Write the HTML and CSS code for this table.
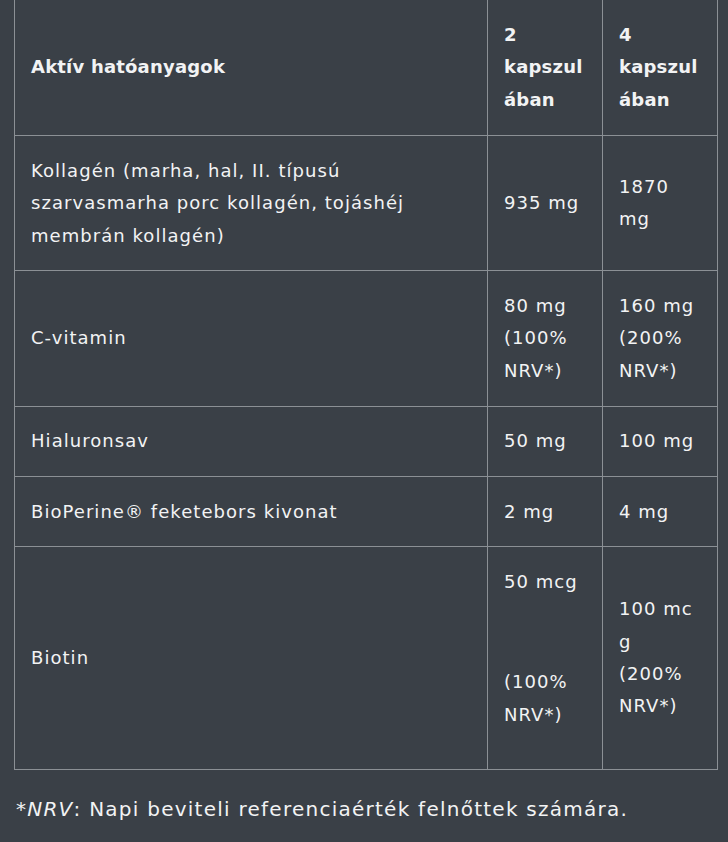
FILE: index.html
```html
<!DOCTYPE html>
<html lang="hu">
<head>
<meta charset="utf-8">
<title>Összetevők</title>
<link rel="stylesheet" href="styles.css">
</head>
<body>
<div class="page">
  <table class="ingredients">
    <colgroup>
      <col class="c-name">
      <col class="c-dose">
      <col class="c-dose">
    </colgroup>
    <thead>
      <tr>
        <th>Aktív hatóanyagok</th>
        <th>2 kapszulában</th>
        <th>4 kapszulában</th>
      </tr>
    </thead>
    <tbody>
      <tr>
        <td>Kollagén (marha, hal, II. típusú szarvasmarha porc kollagén, tojáshéj membrán kollagén)</td>
        <td>935 mg</td>
        <td>1870 mg</td>
      </tr>
      <tr>
        <td>C-vitamin</td>
        <td>80 mg (100% NRV*)</td>
        <td>160 mg (200% NRV*)</td>
      </tr>
      <tr>
        <td>Hialuronsav</td>
        <td>50 mg</td>
        <td>100 mg</td>
      </tr>
      <tr>
        <td>BioPerine® feketebors kivonat</td>
        <td>2 mg</td>
        <td>4 mg</td>
      </tr>
      <tr>
        <td>Biotin</td>
        <td class="top"><span class="line">50 mcg</span><span class="nrv">(100% NRV*)</span></td>
        <td>100&nbsp;mcg<br>(200% NRV*)</td>
      </tr>
    </tbody>
  </table>
  <p class="note"><em>*NRV</em>: Napi beviteli referenciaérték felnőttek számára.</p>
</div>
</body>
</html>
```
FILE: styles.css
```css
html, body {
  margin: 0;
  padding: 0;
  background: #3a4047;
}
body {
  font-family: "DejaVu Sans", "Noto Sans", sans-serif;
  color: #f2f3f4;
  width: 728px;
  height: 842px;
  overflow: hidden;
}
.page {
  padding: 0 10px 0 14px;
}
.ingredients {
  width: 704px;
  table-layout: fixed;
  border-collapse: collapse;
  margin-top: -1px;
}
.c-name { width: 473px; }
.c-dose { width: 115px; }
.ingredients th,
.ingredients td {
  border: 1px solid #8b9095;
  padding: 18.5px 16px;
  font-size: 18px;
  line-height: 32.4px;
  letter-spacing: 1.05px;
  text-align: left;
  vertical-align: middle;
  overflow-wrap: anywhere;
}
.ingredients th {
  font-weight: bold;
  letter-spacing: 0.2px;
  padding-top: 19px;
  padding-bottom: 19px;
}
.ingredients td.top {
  vertical-align: top;
}
.line, .nrv {
  display: block;
}
.nrv {
  margin-top: 68px;
  margin-bottom: 19px;
}
.note {
  margin: 23px 0 0 2px;
  font-size: 20px;
  line-height: 32px;
  letter-spacing: 1.25px;
}
.note em {
  font-style: italic;
}
```
